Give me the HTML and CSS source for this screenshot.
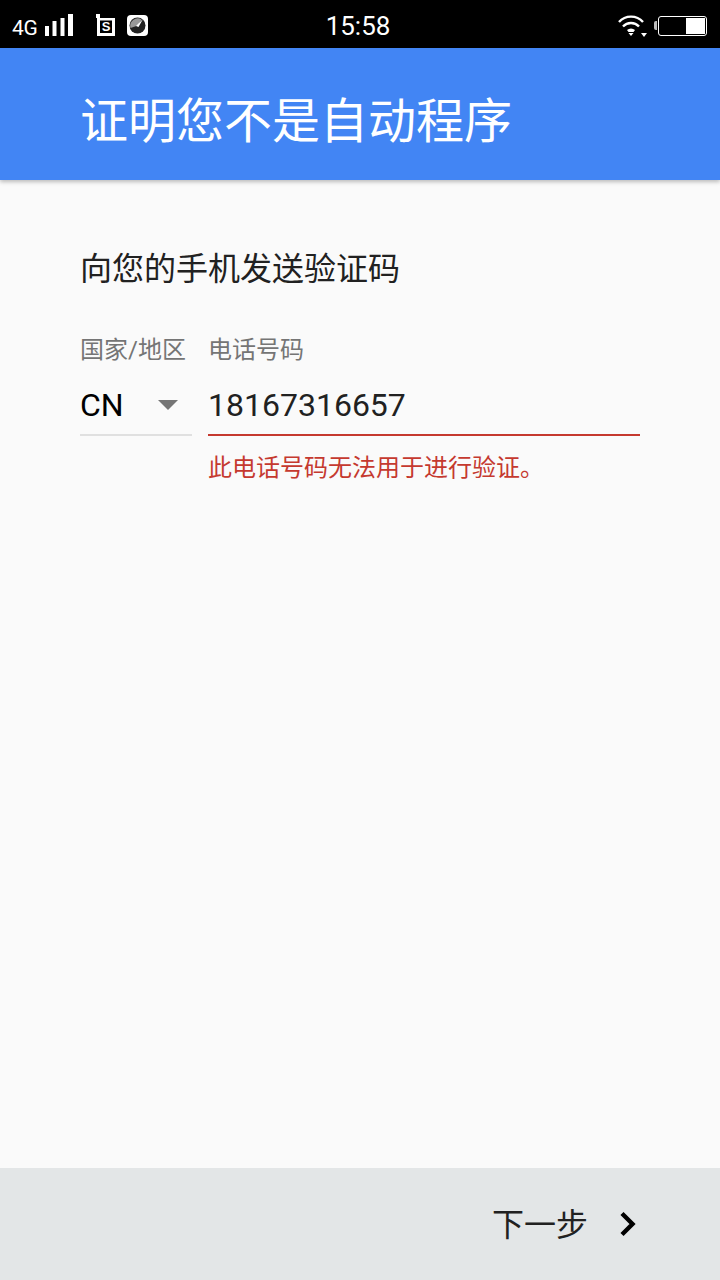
FILE: index.html
```html
<!DOCTYPE html>
<html lang="zh-CN">
<head>
<meta charset="utf-8">
<title>证明您不是自动程序</title>
<link rel="stylesheet" href="styles.css">
</head>
<body>
<div class="app">
  <div class="statusbar">
    <div class="sb-left">
      <span class="net">4G</span>
      <svg class="signal" width="29" height="22" viewBox="0 0 29 22"><g fill="#fff"><rect x="0" y="12" width="4" height="10"/><rect x="7.500" y="7" width="4" height="15"/><rect x="15.500" y="4" width="4" height="18"/><rect x="23" y="0" width="5" height="22"/></g></svg>
      <svg class="ic-s" width="19" height="22" viewBox="0 0 19 22"><path d="M0 0v4h1v18h18V4H4V0z" fill="#fff"/><rect x="4" y="6.500" width="12" height="12.500" fill="#000"/><text x="10" y="17" text-anchor="middle" class="ic-s-t">S</text></svg>
      <svg class="ic-g" width="21" height="21" viewBox="0 0 21 21"><rect width="21" height="21" rx="4" fill="#fff"/><circle cx="10.500" cy="10.500" r="8" fill="#222"/><path d="M3.500 13a7.500 7.500 0 0 1 11-8.500l-3.500 6z" fill="#999"/><path d="M9 11l7-7-4.500 8z" fill="#fff"/></svg>
    </div>
    <div class="clock">15:58</div>
    <div class="sb-right">
      <svg class="wifi" width="30" height="22" viewBox="0 0 30 22"><g fill="none" stroke="#fff" stroke-width="2.400"><path d="M1 7a16 16 0 0 1 24 0"/><path d="M5 11.500a11 11 0 0 1 16 0"/></g><path d="M9 15a6 6 0 0 1 8 0l-1.500 2h-5z" fill="#fff"/><path d="M10.500 18h5L13 21zM23 18h6l-3 4z" fill="#fff"/></svg>
      <div class="battery"><span class="batt-cap"></span><span class="batt-level"></span></div>
    </div>
  </div>
  <header class="appbar"><h1>证明您不是自动程序</h1></header>
  <main class="content">
    <h2>向您的手机发送验证码</h2>
    <div class="form">
      <div class="field country">
        <label>国家/地区</label>
        <div class="value select"><span>CN</span><i class="caret"></i></div>
      </div>
      <div class="field phone">
        <label>电话号码</label>
        <div class="value input">18167316657</div>
        <p class="error">此电话号码无法用于进行验证。</p>
      </div>
    </div>
  </main>
  <footer class="footer">
    <span class="next">下一步</span>
    <svg class="chev" width="20" height="28" viewBox="0 0 20 28"><path d="M4 3.500l10.500 10.500L4 24.500" fill="none" stroke="#000" stroke-width="4.400"/></svg>
  </footer>
</div>
</body>
</html>
```
FILE: styles.css
```css
* { box-sizing: border-box; }
html, body { margin: 0; padding: 0; }
body { font-family: Roboto, "Noto Sans CJK SC", sans-serif; background: #fafafa; }
.app { width: 720px; height: 1280px; display: flex; flex-direction: column; overflow: hidden; }

.statusbar { height: 48px; background: #000; color: #fff; display: grid; grid-template-columns: 1fr auto 1fr; align-items: center; flex: none; }
.sb-left { display: flex; align-items: center; padding-left: 12px; height: 48px; }
.net { font-size: 21px; line-height: 24px; letter-spacing: -0.4px; margin-top: 5px; width: 33px; }
.signal { margin-top: 0; }
.ic-s { margin-left: 22px; margin-top: 0; }
.ic-s-t { font-family: "Liberation Sans", sans-serif; font-size: 13px; font-weight: 700; fill: #fff; }
.ic-g { margin-left: 12px; margin-top: 0; }
.clock { font-size: 26px; line-height: 48px; font-family: Roboto, sans-serif; margin-top: 2px; margin-left: -4px; }
.sb-right { display: flex; justify-content: flex-end; align-items: center; padding-right: 13px; }
.wifi { margin-right: 10px; margin-top: 2px; }
.battery { position: relative; width: 49px; height: 20px; border: 1.500px solid #fff; border-radius: 3px; margin-top: 1px; }
.batt-level { position: absolute; right: 1px; top: 1px; bottom: 1px; width: 19px; background: #fff; }
.batt-cap { position: absolute; left: -5px; top: 4px; width: 3px; height: 9px; background: #bbb; border-radius: 2px 0 0 2px; }

.appbar { height: 132px; background: #4285f4; flex: none; display: flex; align-items: center; padding: 16px 0 0 80px; box-shadow: 0 2px 4px rgba(0,0,0,.25); position: relative; }
.appbar h1 { margin: 0; font-size: 48px; font-weight: 400; color: #fff; line-height: 60px; }

.content { flex: 1; padding: 65px 80px 0; }
.content h2 { margin: 0; font-size: 32px; line-height: 48px; font-weight: 400; color: #212121; }
.form { display: flex; gap: 16px; margin-top: 32px; }
.field label { display: block; font-size: 24px; line-height: 32px; color: #757575; margin-top: 9px; white-space: nowrap; }
.country { width: 112px; flex: none; }
.phone { flex: 1; }
.value { height: 64px; margin-top: 6px; padding-top: 11px; font-size: 32px; line-height: 44px; }
.select { display: flex; justify-content: space-between; color: #000; border-bottom: 2px solid #e0e0e0; }
.caret { width: 0; height: 0; margin: 17px 14px 0 0; border-left: 10px solid transparent; border-right: 10px solid transparent; border-top: 10px solid #757575; }
.input { color: #212121; border-bottom: 2px solid #c5392f; }
.error { margin: 16px 0 0; font-size: 24px; line-height: 32px; color: #c5392f; }

.footer { height: 112px; flex: none; background: #e3e6e7; display: flex; align-items: center; justify-content: flex-end; padding-right: 82px; }
.next { font-size: 32px; line-height: 48px; color: #212121; margin-right: 30px; margin-top: 2px; }
.chev { margin-top: -1px; }
```
